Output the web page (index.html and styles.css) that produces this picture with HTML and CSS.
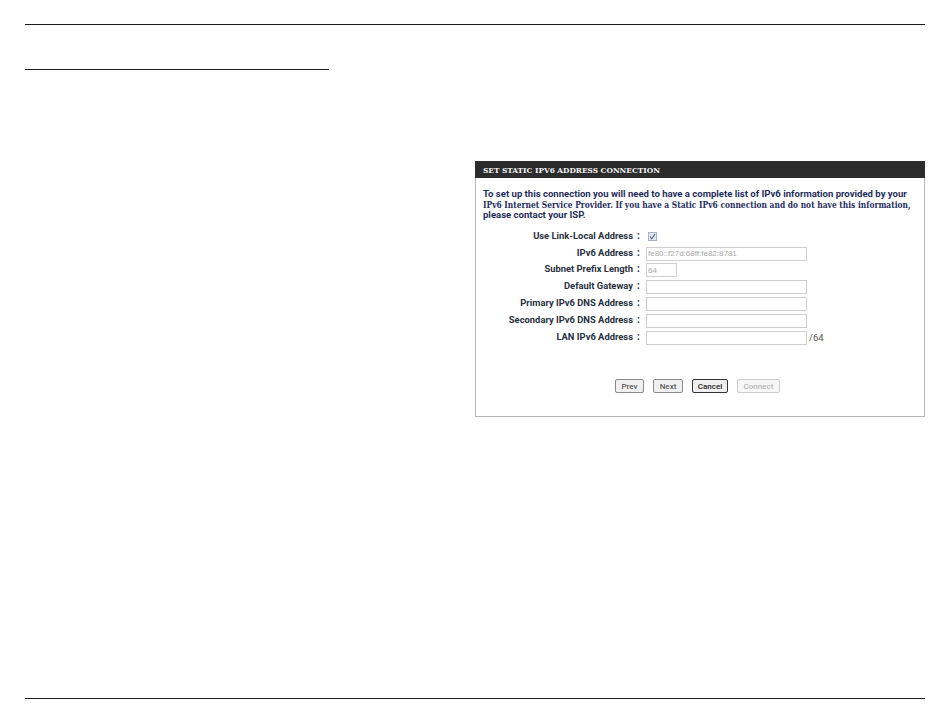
FILE: index.html
```html
<!DOCTYPE html>
<html lang="en">
<head>
  <meta charset="UTF-8" />
  <title>Set Static IPv6 Address Connection</title>
  <link rel="stylesheet" href="styles.css">
</head>
<body>
  <div class="page">
    <div class="top-rule"></div>
    <div class="section-rule"></div>

    <div class="panel-row">
      <div class="panel">
        <h2>SET STATIC IPV6 ADDRESS CONNECTION</h2>
        <p class="intro">
          <span class="line-a">To set up this connection you will need to have a complete list of IPv6 information provided by your</span>
          <span class="line-b">IPv6 Internet Service Provider. If you have a Static IPv6 connection and do not have this information,</span>
          <span class="line-a">please contact your ISP.</span>
        </p>

        <div class="form">
          <div class="form-row">
            <label>Use Link-Local Address</label><span class="colon">:</span>
            <span class="check">
              <svg width="7" height="7" viewBox="0 0 7 7"><path d="M1 3.5 L2.8 5.8 L6 1" fill="none" stroke="#5b6a80" stroke-width="1.2"/></svg>
            </span>
          </div>
          <div class="form-row">
            <label>IPv6 Address</label><span class="colon">:</span>
            <input class="wide" type="text" value="fe80::f27d:68ff:fe82:8781" disabled />
          </div>
          <div class="form-row">
            <label>Subnet Prefix Length</label><span class="colon">:</span>
            <input class="short" type="text" value="64" disabled />
          </div>
          <div class="form-row">
            <label>Default Gateway</label><span class="colon">:</span>
            <input class="wide" type="text" />
          </div>
          <div class="form-row">
            <label>Primary IPv6 DNS Address</label><span class="colon">:</span>
            <input class="wide" type="text" />
          </div>
          <div class="form-row">
            <label>Secondary IPv6 DNS Address</label><span class="colon">:</span>
            <input class="wide" type="text" />
          </div>
          <div class="form-row">
            <label>LAN IPv6 Address</label><span class="colon">:</span>
            <input class="wide" type="text" /><span class="suffix">/64</span>
          </div>
        </div>

        <div class="buttons">
          <button class="btn-prev">Prev</button>
          <button class="btn-next">Next</button>
          <button class="btn-cancel">Cancel</button>
          <button class="btn-connect" disabled>Connect</button>
        </div>
      </div>
    </div>

    <div class="bottom-rule"></div>
  </div>
</body>
</html>
```

FILE: styles.css
```css
html, body {
  margin: 0;
  padding: 0;
  background: #ffffff;
}
.page {
  width: 950px;
  height: 725px;
  box-sizing: border-box;
  padding: 24px 25px 0;
  font-family: Roboto, "Liberation Sans", Arial, sans-serif;
  color: #2a3140;
  overflow: hidden;
}
.top-rule {
  height: 1px;
  background: #1c1c1c;
}
.section-rule {
  width: 304px;
  height: 1px;
  margin-top: 44px;
  background: #1c1c1c;
}
.panel-row {
  display: flex;
  justify-content: flex-end;
  margin-top: 91px;
}
.panel {
  width: 450px;
  height: 256px;
  box-sizing: border-box;
  border: 1px solid #b5b5b5;
  border-top: none;
}
h2 {
  margin: 0 -1px;
  height: 17px;
  padding-left: 8px;
  background: #2c2c2c;
  color: #f2f2f2;
  font-family: "DejaVu Serif Condensed", "DejaVu Serif", serif;
  font-size: 8.2px;
  font-weight: bold;
  line-height: 19px;
}
.intro {
  margin: 11px 0 0 7px;
  color: #1f2d5c;
  font-size: 9.55px;
  font-weight: bold;
  line-height: 10.5px;
}
.line-a, .line-b {
  display: block;
  white-space: nowrap;
}
.line-b {
  font-family: "DejaVu Serif Condensed", "DejaVu Serif", serif;
  font-size: 8.35px;
}
.form {
  margin-top: 8px;
}
.form-row {
  display: flex;
  align-items: center;
  height: 16.8px;
}
label {
  width: 157px;
  padding-bottom: 3px;
  text-align: right;
  font-size: 9.4px;
  font-weight: bold;
  white-space: nowrap;
}
.colon {
  width: 13px;
  flex: none;
  padding: 0 0 3px 4px;
  box-sizing: border-box;
  font-size: 10px;
  font-weight: bold;
}
input {
  height: 14px;
  box-sizing: border-box;
  margin: 0;
  padding: 0 1px;
  border: 1px solid #cfcfcf;
  background: #ffffff;
  color: #a8a8a8;
  font-family: "Liberation Sans", Arial, sans-serif;
  font-size: 8px;
}
input.wide {
  width: 161px;
}
input.short {
  width: 31px;
}
.check {
  display: flex;
  align-items: center;
  justify-content: center;
  width: 9px;
  height: 9px;
  box-sizing: border-box;
  margin-left: 2px;
  border: 1px solid #a9b4c2;
  background: #dfe5ee;
}
.suffix {
  margin-left: 2px;
  font-size: 9.5px;
  color: #555555;
}
.buttons {
  display: flex;
  margin: 33px 0 0 139px;
}
button {
  height: 14px;
  box-sizing: border-box;
  margin-right: 9px;
  padding: 0;
  border: 1px solid #8a8a8a;
  border-radius: 2px;
  background: #f0f0f0;
  color: #5a5a5a;
  font-family: Roboto, "Liberation Sans", Arial, sans-serif;
  font-size: 8px;
  font-weight: 500;
}
.btn-prev {
  width: 29px;
}
.btn-next {
  width: 30px;
}
.btn-cancel {
  width: 36px;
  border-color: #333333;
  color: #222222;
}
.btn-connect {
  width: 43px;
  margin-right: 0;
  border-color: #cccccc;
  background: #f7f7f7;
  color: #b5b5b5;
}
.bottom-rule {
  height: 1px;
  margin-top: 281px;
  background: #1c1c1c;
}
```
